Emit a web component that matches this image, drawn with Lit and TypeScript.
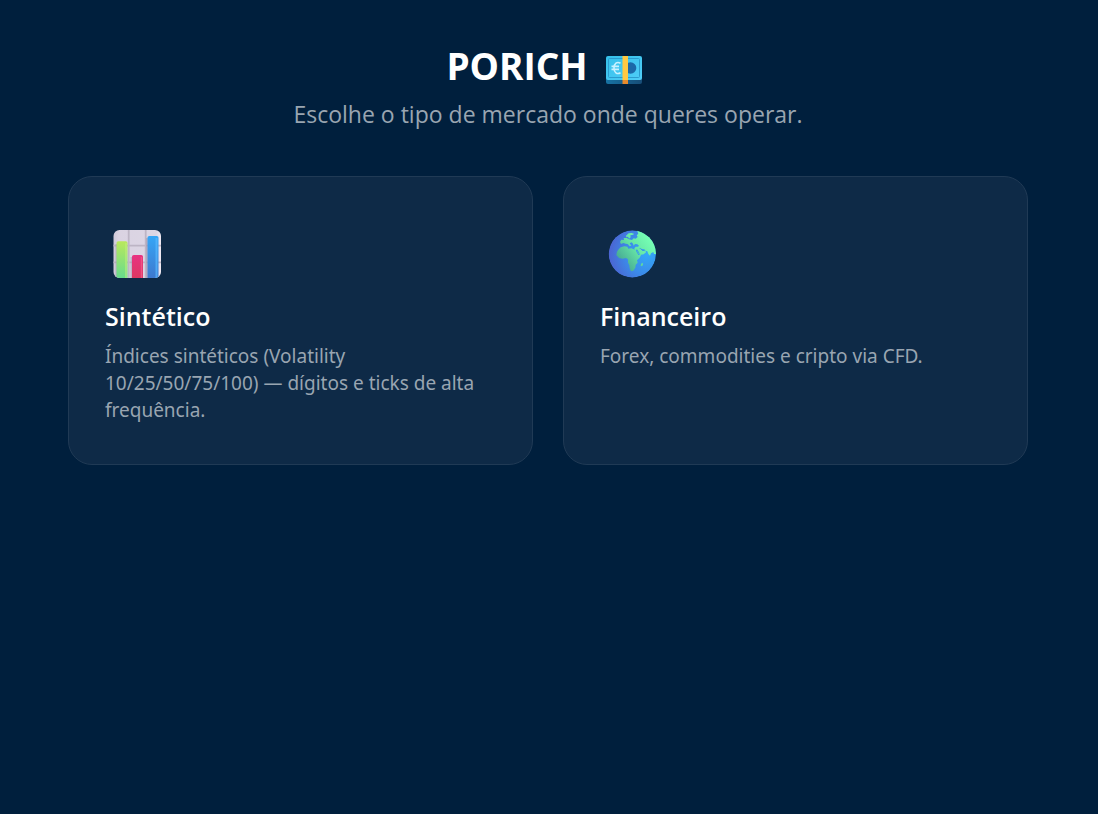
import { LitElement, html, css, svg } from "lit";
import { customElement } from "lit/decorators.js";

const banknote = html`
  <svg class="note" viewBox="0 0 36 28" aria-hidden="true">
    <defs>
      <linearGradient id="n" x1="0" y1="0" x2="1" y2="1">
        <stop offset="0" stop-color="#35c0ea" /><stop offset="1" stop-color="#4fcdf8" />
      </linearGradient>
      <linearGradient id="e" x1="0" y1="0" x2="1" y2="0">
        <stop offset="0" stop-color="#1773a4" /><stop offset="1" stop-color="#174d78" />
      </linearGradient>
    </defs>
    <rect x="0" y="4" width="36" height="24" rx="2" fill="url(#e)" />
    <rect x="0" y="0" width="36" height="24" rx="2" fill="url(#n)" />
    <rect x="2.5" y="2.5" width="31" height="19" rx="1" fill="none" stroke="#2b9ccf" stroke-width="1" />
    <circle cx="24.500" cy="12" r="5.8" fill="#1c68a8" />
    <path d="M14.5 7.3C11 5.2 8 7.5 8 12s3 6.800 6.500 4.700M5.500 10.400h7.500M5.500 13.400h7.500" fill="none" stroke="#c9f2ff" stroke-width="1.600" />
    <rect x="16.500" y="0" width="5.500" height="24" fill="#ffc943" />
    <rect x="16.500" y="24" width="5.500" height="4" fill="#e88a2c" />
  </svg>`;

const chart = svg`
  <defs>
    <linearGradient id="p" x1="0" y1="0" x2="1" y2="0">
      <stop offset="0" stop-color="#cfc8d8" /><stop offset=".12" stop-color="#dad3e2" />
      <stop offset=".9" stop-color="#dcd6e4" /><stop offset="1" stop-color="#efe9f3" />
    </linearGradient>
    <linearGradient id="g" x1="0" y1="0" x2="0" y2="1">
      <stop offset="0" stop-color="#b9e85c" /><stop offset="1" stop-color="#67dc8d" />
    </linearGradient>
    <linearGradient id="r" x1="0" y1="0" x2="0" y2="1">
      <stop offset="0" stop-color="#e83282" /><stop offset="1" stop-color="#dc3862" />
    </linearGradient>
    <linearGradient id="b" x1="0" y1="0" x2="0" y2="1">
      <stop offset="0" stop-color="#35a6f6" /><stop offset="1" stop-color="#3e79cf" />
    </linearGradient>
    <clipPath id="c"><rect x=".5" width="47.500" height="48" rx="6" /></clipPath>
  </defs>
  <g clip-path="url(#c)">
    <rect width="48" height="48" fill="url(#p)" />
    <path d="M15.700 0v48M32.700 0v48M0 15.700h48M0 32.300h48" stroke="#bdb5c5" stroke-width="1.800" />
    <path d="M2.500 48V14h2v34zM17.500 48V27h2v21zM33 48V8h2v40z" fill="#9c92aa" opacity=".5" />
    <path d="M3.500 48V13a1.800 1.800 0 0 1 1.800-1.800h7.400A1.800 1.800 0 0 1 14.500 13v35z" fill="url(#g)" />
    <path d="M19 48V26.800a1.800 1.800 0 0 1 1.800-1.800h7.400a1.800 1.800 0 0 1 1.800 1.800V48z" fill="url(#r)" />
    <path d="M34.500 48V7.800A1.800 1.800 0 0 1 36.300 6h7.400A1.800 1.800 0 0 1 45.500 7.800V48z" fill="url(#b)" />
    <path d="M13 13v35" stroke="#c5f07b" stroke-width="1.400" opacity=".7" />
    <path d="M28.500 27v21" stroke="#f25b88" stroke-width="1.400" opacity=".8" />
    <path d="M43.500 8v40" stroke="#56b9ff" stroke-width="2" opacity=".7" />
  </g>`;

const globe = svg`
  <defs>
    <radialGradient id="o" cx=".82" cy=".5" r=".85">
      <stop offset="0" stop-color="#32a8f8" /><stop offset=".5" stop-color="#3b8cea" />
      <stop offset="1" stop-color="#4d60cf" />
    </radialGradient>
    <linearGradient id="l" gradientUnits="userSpaceOnUse" x1="150" y1="50" x2="60" y2="120">
      <stop offset="0" stop-color="#76ffb4" /><stop offset=".45" stop-color="#66e6a6" />
      <stop offset="1" stop-color="#46a893" />
    </linearGradient>
    <clipPath id="w"><circle cx="97" cy="96" r="71" /></clipPath>
  </defs>
  <g transform="scale(.333333) translate(-24 -24)" clip-path="url(#w)">
    <circle cx="97" cy="96" r="71" fill="url(#o)" />
    <g fill="url(#l)">
      <path d="M111 24L172 24V96L162 96L160 90L153 94L150 101L145 96L142 88L137 86L133 82L126 81L121 79L114 82L108 84L109 89L104 84L103 79L107 74L114 74L117 71L112 67L105 66L101 71L99 65L95 61L89 64L94 71L89 73L83 66L77 65L70 63L63 66L60 60L64 53L72 54L71 48L80 48L87 52L96 54L101 49L107 50L113 45L110 39L115 36Z" />
      <path d="M78 41L86 34L95 33L103 36L97 39L91 40L92 46L87 50L84 44L79 46Z" />
      <path d="M62 76L73 73L82 74L85 80L94 79L105 83L110 91L115 99L123 99L119 107L111 115L113 122L107 128L106 137L100 146L93 148L89 139L88 130L84 122L84 112L78 108L68 110L57 108L49 99L51 89L56 82Z" />
      <path d="M110 82L121 80L127 86L136 85L138 91L131 97L120 99L114 93Z" />
      <path d="M128 122L129 128L126 133L122 131L123 125Z" />
    </g>
    <path d="M111 83L118 95" stroke="#3c97e2" stroke-width="2.500" />
    <path d="M122 80L127 85L134 86" stroke="#3c97e2" stroke-width="3" fill="none" />
  </g>`;

const markets = [
  {
    icon: chart,
    name: "Sintético",
    text: "Índices sintéticos (Volatility 10/25/50/75/100) — dígitos e ticks de alta frequência.",
  },
  { icon: globe, name: "Financeiro", text: "Forex, commodities e cripto via CFD." },
];

@customElement("app-root")
export class AppRoot extends LitElement {
  static styles = css`
    :host {
      display: block;
      box-sizing: border-box;
      min-height: 100vh;
      padding: 41px 70px 41px 68px;
      background: #001f3d;
      color: #fff;
      font-family: "Segoe UI", "Noto Sans", "Open Sans", sans-serif;
    }
    .head { text-align: center; }
    h1, h2, p { margin: 0; }
    h1 {
      display: flex;
      justify-content: center;
      align-items: center;
      gap: 18px;
      padding-right: 8px;
      font-family: "Segoe UI", "Open Sans", sans-serif;
      font-size: 37px;
      line-height: 50px;
      font-weight: 700;
    }
    .note { width: 36px; height: 28px; margin-top: 8px; }
    .lead {
      margin-top: 5px;
      font-size: 23px;
      line-height: 36px;
      font-family: "Segoe UI", "Open Sans", sans-serif;
      color: #99a5b1;
    }
    .grid {
      display: grid;
      grid-template-columns: repeat(auto-fit, minmax(min(100%, 330px), 1fr));
      gap: 30px;
      max-width: 960px;
      margin: 44px auto 0;
    }
    .card {
      display: block;
      padding: 53px 36px 40px;
      border: 1px solid #203a55;
      border-radius: 24px;
      background: #0e2a47;
      color: inherit;
      text-decoration: none;
    }
    .icon { display: block; width: 48px; height: 48px; margin-left: 8px; }
    h2 {
      margin-top: 20px;
      font-family: "Segoe UI", "Open Sans", sans-serif;
      font-size: 25px;
      line-height: 36px;
      font-weight: 600;
    }
    .text {
      margin-top: 9px;
      font-size: 19px;
      line-height: 27px;
      color: #99a5b1;
    }
  `;

  render() {
    return html`
      <header class="head">
        <h1><span>PORICH</span>${banknote}</h1>
        <p class="lead">Escolhe o tipo de mercado onde queres operar.</p>
      </header>
      <main class="grid">
        ${markets.map(
          (m) => html`
            <a class="card" href="#">
              <svg class="icon" viewBox="0 0 48 48" aria-hidden="true">${m.icon}</svg>
              <h2>${m.name}</h2>
              <p class="text">${m.text}</p>
            </a>
          `,
        )}
      </main>
    `;
  }
}
